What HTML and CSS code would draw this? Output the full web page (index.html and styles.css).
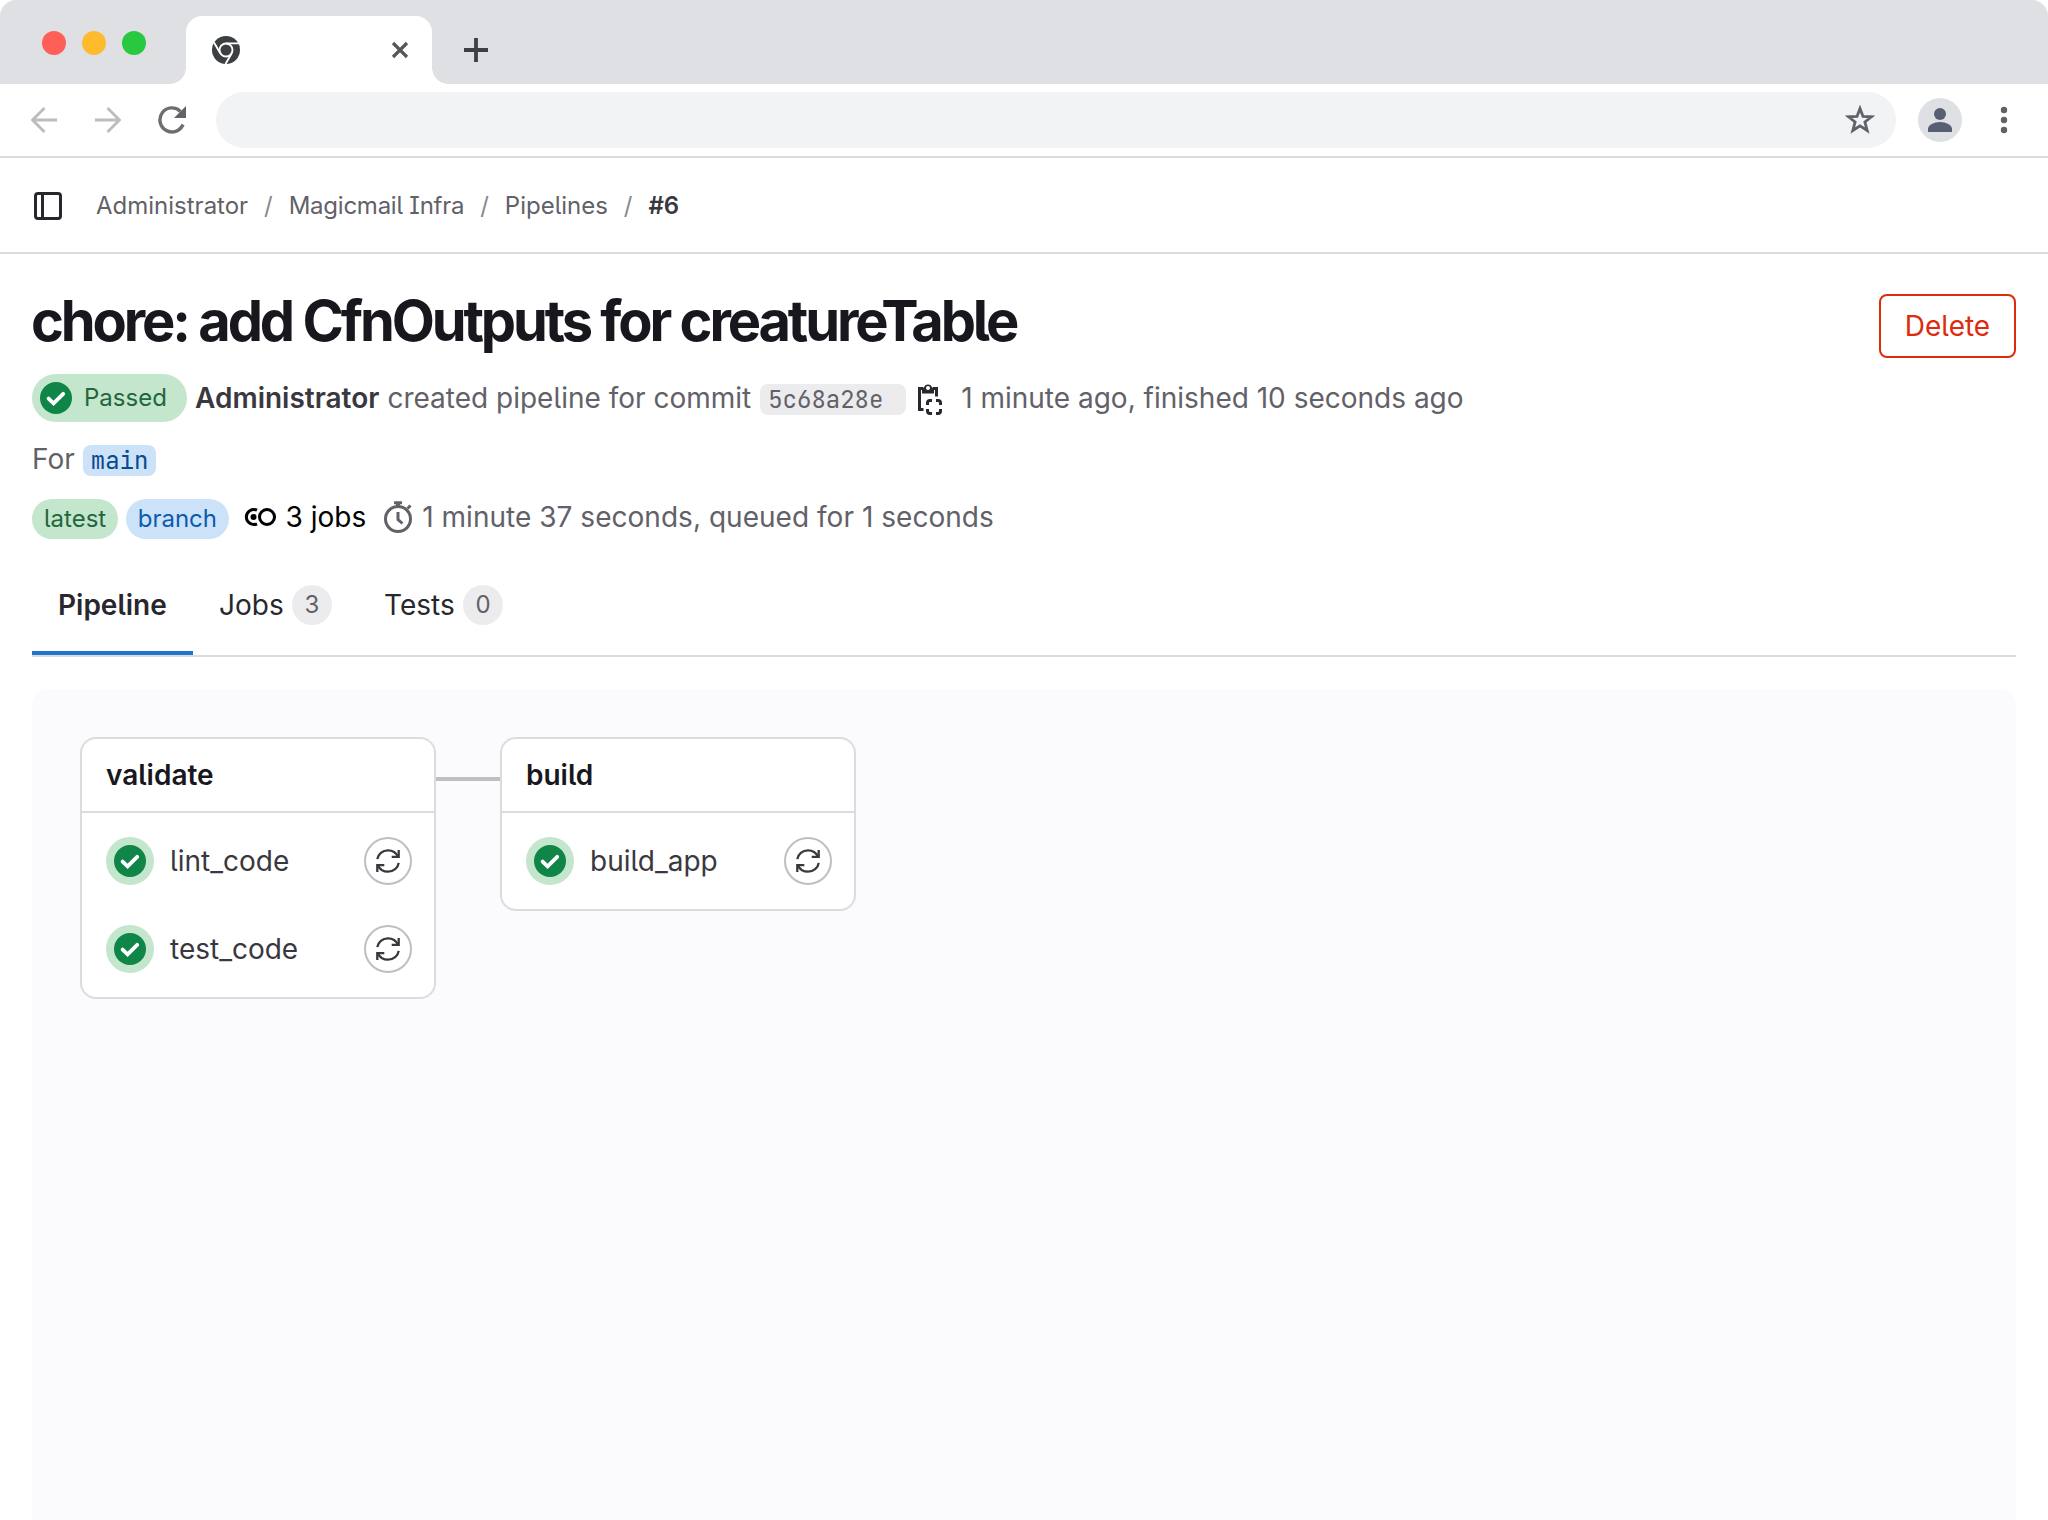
FILE: index.html
```html
<!DOCTYPE html>
<html lang="en">
<head>
<meta charset="utf-8">
<title>Pipeline #6</title>
<link rel="stylesheet" href="styles.css">
</head>
<body>
<svg class="sprite" aria-hidden="true">
  <symbol id="check" viewBox="0 0 16 16"><circle cx="8" cy="8" r="8" fill="#108548"/><path d="M4.300 8.300 6.800 10.700 11.600 5.900" fill="none" stroke="#fff" stroke-width="1.900" stroke-linejoin="miter" stroke-linecap="round"/></symbol>
  <symbol id="retry" viewBox="0 0 24 24"><g fill="none" stroke="currentColor" stroke-width="2.300"><path d="M1.300 10.200C2 5 6.500 1.300 12 1.300c4.500 0 8.300 2.600 10 6.300"/><path d="M22.700 1v6.800h-7"/><path d="M22.700 13.800C22 19 17.500 22.700 12 22.700c-4.500 0-8.300-2.600-10-6.300"/><path d="M1.300 23v-6.800h7"/></g></symbol>
</svg>
<header class="browser">
  <div class="strip">
    <div class="lights"><i class="light red"></i><i class="light amber"></i><i class="light green"></i></div>
    <div class="tab">
      <svg width="28" height="28" viewBox="0 0 28 28"><circle cx="14" cy="14" r="14" fill="#3c4043"/><circle cx="14" cy="14" r="6.500" fill="none" stroke="#fff" stroke-width="1.900"/><path d="M14 7.400H27M8.300 17.300 2 6.500M19.700 17.300 13.500 28" stroke="#fff" stroke-width="1.900"/></svg>
      <svg width="18" height="18" viewBox="0 0 18 18"><path d="M2 2 16 16M16 2 2 16" stroke="#54575b" stroke-width="3.200"/></svg>
    </div>
    <svg class="plus" width="24" height="24" viewBox="0 0 24 24"><path d="M12 0V24M0 12H24" stroke="#3c4043" stroke-width="3.800"/></svg>
  </div>
  <div class="toolbar">
    <svg class="nav" width="26" height="26" viewBox="0 0 26 26"><path d="M26 13H2M13.500 1 1.500 13 13.500 25" fill="none" stroke="#babcbe" stroke-width="2.800"/></svg>
    <svg class="nav" width="26" height="26" viewBox="0 0 26 26"><path d="M0 13H24M12.500 1 24.500 13 12.500 25" fill="none" stroke="#babcbe" stroke-width="2.800"/></svg>
    <svg class="reload" width="28" height="28" viewBox="0 0 28 28"><path d="M25 18.500A12 12 0 1 1 22.500 5.500" fill="none" stroke="#6b6e72" stroke-width="3.400"/><path d="M28 0V12H16z" fill="#5f6368"/></svg>
    <div class="address"><svg width="30" height="30" viewBox="0 0 30 30"><path d="M15 3.500 18 11.400 26.500 11.800 19.900 17 22.200 25.500 15 20.800 7.800 25.500 10.100 17 3.500 11.800 12 11.400z" fill="none" stroke="#5f6368" stroke-width="2.800"/></svg></div>
    <svg class="avatar" width="44" height="44" viewBox="0 0 44 44"><circle cx="22" cy="22" r="22" fill="#dee0e4"/><circle cx="22" cy="16" r="6" fill="#566072"/><path d="M10 34v-3c0-4 6-7 12-7s12 3 12 7v3z" fill="#566072"/></svg>
    <svg class="dots" width="8" height="28" viewBox="0 0 8 28"><g fill="#5f6368"><circle cx="4" cy="4" r="3.200"/><circle cx="4" cy="14" r="3.200"/><circle cx="4" cy="24" r="3.200"/></g></svg>
  </div>
</header>
<nav class="crumbs">
  <svg width="32" height="32" viewBox="0 0 32 32"><rect x="3.500" y="3.500" width="25" height="25" rx="2.500" fill="none" stroke="#28272d" stroke-width="3"/><path d="M10.500 3V29" stroke="#28272d" stroke-width="3"/></svg>
  <span class="crumb first">Administrator</span><span class="slash">/</span><span class="crumb project">Magicmail Infra</span><span class="slash">/</span><span class="crumb">Pipelines</span><span class="slash">/</span><b class="crumb">#6</b>
</nav>
<main>
  <div class="heading">
    <h1>chore: add CfnOutputs for creatureTable</h1>
    <button class="delete">Delete</button>
  </div>
  <div class="row commit">
    <span class="passed"><svg width="32" height="32"><use href="#check"/></svg><span>Passed</span></span>
    <b class="author">Administrator</b>
    <span class="created">created pipeline for commit</span>
    <code class="sha">5c68a28e</code>
    <svg class="copy" width="32" height="32" viewBox="0 0 32 32"><path d="M8 10.500V4.500h2a4.200 4.200 0 0 1 8 0h2v6zM14 7a2 2 0 1 0 0-4 2 2 0 0 0 0 4z" fill="#28272d" fill-rule="evenodd"/><g fill="none" stroke="#28272d" stroke-width="3"><path d="M9 5.500H5.500V26.500H9.500M19 5.500H22.500V13.500"/><path d="M13.500 22v-2a2.500 2.500 0 0 1 2.500-2.500h2M22 17.500h2a2.500 2.500 0 0 1 2.500 2.500v2M26.500 26v2a2.500 2.500 0 0 1-2.500 2.500h-2M18 30.500h-2a2.500 2.500 0 0 1-2.500-2.500v-2"/></g></svg>
    <span>1 minute ago, finished 10 seconds ago</span>
  </div>
  <div class="row ref"><span>For</span><code class="branch-name">main</code></div>
  <div class="row meta">
    <span class="pill green-pill">latest</span><span class="pill blue-pill">branch</span>
    <div class="row stats">
      <svg width="32" height="32" viewBox="0 0 32 32"><g fill="none" stroke="#000" stroke-width="3"><circle cx="23" cy="16" r="7.500"/><path d="M13 9.200A7.500 7.500 0 1 0 13 22.800"/></g><circle cx="9.500" cy="16" r="3" fill="#000"/></svg>
      <span class="jobs">3 jobs</span>
      <svg class="timer" width="32" height="32" viewBox="0 0 32 32"><g fill="none" stroke="#626168" stroke-width="3"><circle cx="16" cy="18" r="12.500"/><path d="M14 3.500H18" stroke-width="3"/><path d="M12 1.700H20M25.500 7.500 28.500 4.500M16 11V18.500L20.500 22.500"/></g></svg>
      <span class="duration">1 minute 37 seconds, queued for 1 seconds</span>
    </div>
  </div>
  <div class="tabs">
    <span class="tab-item active">Pipeline</span>
    <span class="tab-item">Jobs<i class="count">3</i></span>
    <span class="tab-item">Tests<i class="count">0</i></span>
  </div>
  <section class="canvas">
    <article class="stage">
      <h2>validate</h2>
      <div class="jobs-list">
        <div class="job"><span class="status"><svg width="32" height="32"><use href="#check"/></svg></span><span class="name">lint_code</span><span class="retry"><svg width="24" height="24"><use href="#retry"/></svg></span></div>
        <div class="job"><span class="status"><svg width="32" height="32"><use href="#check"/></svg></span><span class="name">test_code</span><span class="retry"><svg width="24" height="24"><use href="#retry"/></svg></span></div>
      </div>
    </article>
    <div class="link"></div>
    <article class="stage">
      <h2>build</h2>
      <div class="jobs-list">
        <div class="job"><span class="status"><svg width="32" height="32"><use href="#check"/></svg></span><span class="name">build_app</span><span class="retry"><svg width="24" height="24"><use href="#retry"/></svg></span></div>
      </div>
    </article>
  </section>
</main>
</body>
</html>
```
FILE: styles.css
```css
* { box-sizing: border-box; }
body { margin: 0; display: flex; flex-direction: column; height: 1520px; overflow: hidden; background: #fff; color: #626168; font: 28px/40px Inter, sans-serif; font-feature-settings: "cv05", "cv08"; white-space: nowrap; }
svg { display: block; flex: none; }
i { font-style: normal; }
.sprite { position: absolute; width: 0; height: 0; }

.browser { height: 158px; flex: none; border-bottom: 2px solid #dcdcde; }
.strip { height: 84px; display: flex; align-items: flex-start; background: #dee0e4; border-radius: 16px 16px 0 0; }
.lights { display: flex; gap: 16px; padding: 31px 0 0 42px; width: 186px; }
.light { width: 24px; height: 24px; border-radius: 50%; }
.red { background: #ff5f57; }
.amber { background: #febb2e; }
.green { background: #28c840; }
.tab { position: relative; width: 246px; height: 68px; margin-top: 16px; padding: 0 23px 0 26px; display: flex; align-items: center; justify-content: space-between; background: #fff; border-radius: 16px 16px 0 0; }
.tab::before, .tab::after { content: ""; position: absolute; bottom: 0; width: 16px; height: 16px; }
.tab::before { left: -16px; background: radial-gradient(circle at 0 0, transparent 15.500px, #fff 16px); }
.tab::after { right: -16px; background: radial-gradient(circle at 100% 0, transparent 15.500px, #fff 16px); }
.plus { margin: 38px 0 0 32px; }
.toolbar { height: 72px; display: flex; align-items: center; padding-left: 31px; }
.nav { margin-right: 38px; }
.reload { margin-right: 30px; margin-left: -1px; }
.address { width: 1680px; height: 56px; border-radius: 28px; background: #f1f3f4; display: flex; align-items: center; justify-content: flex-end; padding-right: 21px; }
.avatar { margin-left: 22px; }
.dots { margin-left: 38px; }

.crumbs { height: 96px; flex: none; display: flex; align-items: center; padding: 1px 32px 0; border-bottom: 2px solid #dcdcde; font-size: 24px; color: #626168; }
.first { margin-left: 32px; }
.project { letter-spacing: -0.24px; }
.slash { width: 40.500px; text-align: center; color: #89888d; }
.crumbs b { color: #3a383f; font-weight: 600; }

main { flex: 1; display: flex; flex-direction: column; padding: 0 32px; min-height: 0; }
.heading { display: flex; justify-content: space-between; align-items: flex-start; padding-top: 40px; height: 120px; }
h1 { margin: -8px 0 0 -1px; font-size: 56px; line-height: 70px; font-weight: 670; letter-spacing: -3.13px; word-spacing: 0.3px; color: #18171d; }
.delete { width: 137px; height: 64px; padding: 0; font: inherit; font-feature-settings: inherit; color: #dd2b0e; background: #fff; border: 2px solid #dd2b0e; border-radius: 8px; }
.row { display: flex; align-items: center; }
.commit { height: 48px; }
.passed { display: flex; align-items: center; gap: 12px; width: 155px; height: 48px; padding-left: 8px; border-radius: 24px; background: #c3e6cd; color: #24663b; font-size: 24px; }
.author { margin-left: 8px; color: #3a383f; font-weight: 600; }
.created { margin-left: 8px; }
code { font: 24px/32px "JetBrains Mono", "DejaVu Sans Mono", monospace; height: 31px; border-radius: 8px; padding-left: 8px; }
.commit code, .ref code { position: relative; top: 1px; }
.sha { width: 146px; margin-left: 9px; background: #ececef; }
.copy { margin: 2px 15px 0 8px; }
.ref { height: 40px; margin-top: 17px; }
.branch-name { width: 73px; margin-left: 8px; background: #cbe2f9; color: #0b4a8f; }
.meta { height: 40px; margin-top: 20px; }
.pill { height: 40px; padding: 0 12px; border-radius: 20px; font-size: 24px; }
.green-pill { background: #c3e6cd; color: #24663b; }
.blue-pill { background: #cbe2f9; color: #0b5cad; margin-left: 8px; padding: 0 11.500px; }
.stats { margin: -4px 0 0 15px; }
.jobs { margin-left: 10px; color: #000; }
.timer { margin: 0 8px 0 16px; }
.duration { letter-spacing: 0.03px; }

.tabs { display: flex; height: 118px; flex: none; border-bottom: 2px solid #dcdcde; color: #28272d; }
.tab-item { display: flex; align-items: center; margin-top: 16px; padding: 20px 26px 20px; }
.active { width: 161px; font-weight: 600; border-bottom: 4px solid #1f75cb; padding-bottom: 16px; }
.count { width: 40px; height: 40px; margin-left: 8.300px; border-radius: 50%; background: #ececef; color: #626168; font-size: 24px; text-align: center; }

.canvas { flex: 1; margin-top: 32px; padding: 48px; display: flex; align-items: flex-start; border-radius: 16px 16px 0 0; background: #fbfafd; }
.stage { width: 356px; border: 2px solid #dcdcde; border-radius: 16px; background: #fff; }
h2 { height: 74px; margin: 0; padding: 17px 24px 15px; border-bottom: 2px solid #dcdcde; font-size: 28px; line-height: 38px; font-weight: 600; color: #18171d; }
.jobs-list { display: flex; flex-direction: column; gap: 40px; padding: 24px 22px 24px 24px; }
.job { display: flex; align-items: center; height: 48px; color: #3a383f; }
.status { width: 48px; height: 48px; padding: 8px; border-radius: 50%; background: #c3e6cd; }
.name { flex: 1; margin-left: 16px; }
.retry { width: 48px; height: 48px; display: grid; place-items: center; border: 2px solid #bfbfc3; border-radius: 50%; }
.link { width: 64px; height: 4px; margin-top: 40px; background: #bfbfc3; }
```
